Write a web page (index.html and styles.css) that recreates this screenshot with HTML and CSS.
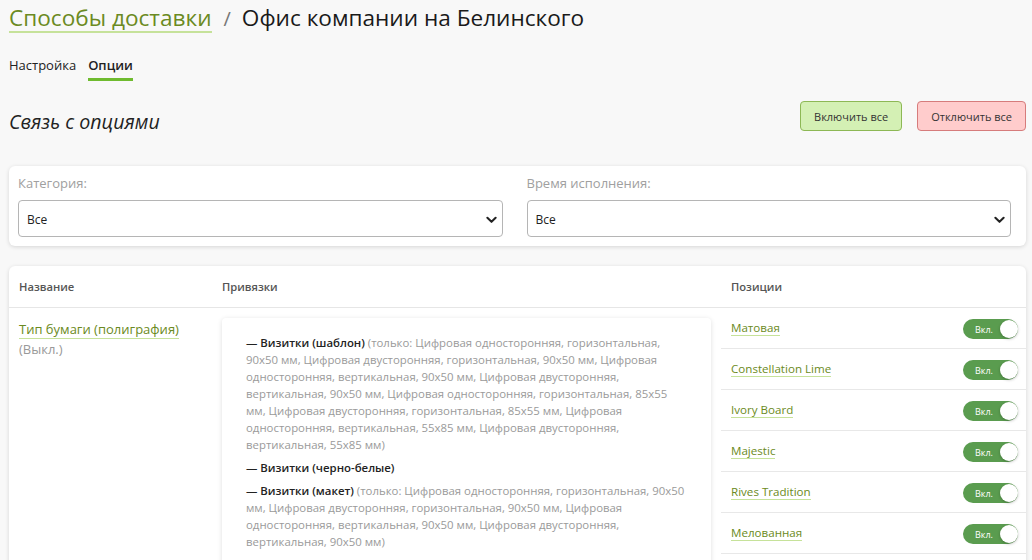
FILE: index.html
```html
<!DOCTYPE html>
<html lang="ru">
<head>
<meta charset="utf-8">
<title>Способы доставки</title>
<link rel="stylesheet" href="styles.css">
</head>
<body>
<div class="page">
  <h1 class="title"><a class="title-link" href="#">Способы доставки</a><span class="sep">/</span><span class="title-cur">Офис компании на Белинского</span></h1>
  <nav class="tabs">
    <a class="tab" href="#">Настройка</a>
    <a class="tab tab-active" href="#">Опции</a>
  </nav>
  <div class="section-head">
    <h2 class="section-title">Связь с опциями</h2>
    <div class="actions">
      <button class="btn btn-on">Включить все</button>
      <button class="btn btn-off">Отключить все</button>
    </div>
  </div>
  <div class="card filters">
    <div class="field">
      <label class="field-label">Категория:</label>
      <div class="select"><span>Все</span><svg class="chev" viewBox="0 0 12 8" width="11" height="8"><path d="M1.5 1.5 L6 6 L10.5 1.5" fill="none" stroke="#222" stroke-width="2.2" stroke-linecap="round" stroke-linejoin="round"/></svg></div>
    </div>
    <div class="field">
      <label class="field-label">Время исполнения:</label>
      <div class="select"><span>Все</span><svg class="chev" viewBox="0 0 12 8" width="11" height="8"><path d="M1.5 1.5 L6 6 L10.5 1.5" fill="none" stroke="#222" stroke-width="2.2" stroke-linecap="round" stroke-linejoin="round"/></svg></div>
    </div>
  </div>
  <div class="card table">
    <div class="thead">
      <div class="th">Название</div>
      <div class="th">Привязки</div>
      <div class="th">Позиции</div>
    </div>
    <div class="row">
      <div class="cell name-cell">
        <a class="link" href="#">Тип бумаги (полиграфия)</a>
        <div class="muted">(Выкл.)</div>
      </div>
      <div class="cell bind-cell">
        <div class="bind-box">
          <p class="bind"><b>— Визитки (шаблон)</b> (только: Цифровая односторонняя, горизонтальная, 90x50 мм, Цифровая двусторонняя, горизонтальная, 90x50 мм, Цифровая односторонняя, вертикальная, 90x50 мм, Цифровая двусторонняя, вертикальная, 90x50 мм, Цифровая односторонняя, горизонтальная, 85x55 мм, Цифровая двусторонняя, горизонтальная, 85x55 мм, Цифровая односторонняя, вертикальная, 55x85 мм, Цифровая двусторонняя, вертикальная, 55x85 мм)</p>
          <p class="bind"><b>— Визитки (черно-белые)</b></p>
          <p class="bind"><b>— Визитки (макет)</b> (только: Цифровая односторонняя, горизонтальная, 90x50 мм, Цифровая двусторонняя, горизонтальная, 90x50 мм, Цифровая односторонняя, вертикальная, 90x50 мм, Цифровая двусторонняя, вертикальная, 90x50 мм)</p>
        </div>
      </div>
      <div class="cell pos-cell">
        <div class="pos"><a class="link" href="#">Матовая</a><span class="toggle"><span class="toggle-txt">Вкл.</span><span class="knob"></span></span></div>
        <div class="pos"><a class="link" href="#">Constellation Lime</a><span class="toggle"><span class="toggle-txt">Вкл.</span><span class="knob"></span></span></div>
        <div class="pos"><a class="link" href="#">Ivory Board</a><span class="toggle"><span class="toggle-txt">Вкл.</span><span class="knob"></span></span></div>
        <div class="pos"><a class="link" href="#">Majestic</a><span class="toggle"><span class="toggle-txt">Вкл.</span><span class="knob"></span></span></div>
        <div class="pos"><a class="link" href="#">Rives Tradition</a><span class="toggle"><span class="toggle-txt">Вкл.</span><span class="knob"></span></span></div>
        <div class="pos"><a class="link" href="#">Мелованная</a><span class="toggle"><span class="toggle-txt">Вкл.</span><span class="knob"></span></span></div>
      </div>
    </div>
  </div>
</div>
</body>
</html>
```
FILE: styles.css
```css
* { box-sizing: border-box; }
html, body { margin: 0; padding: 0; }
body {
  background: #f8f8f8;
  font-family: "Open Sans", "Noto Sans", sans-serif;
  color: #222;
  overflow: hidden;
  height: 560px;
}
.page { padding: 0 6px 0 9px; }
a { text-decoration: none; }

.title {
  margin: 0;
  padding-top: 3px;
  font-size: 22.6px;
  font-weight: 400;
  line-height: 30px;
  display: flex;
  align-items: baseline;
}
.title-link {
  color: #6b8a22;
  border-bottom: 2px solid #c6e29a;
  line-height: 27px;
}
.sep { color: #777; margin: 0 11px 0 12px; font-size: 20px; }
.title-cur { color: #1a1a1a; }

.tabs {
  display: flex;
  gap: 12px;
  margin-top: 22px;
}
.tab {
  font-size: 13px;
  color: #222;
  padding-bottom: 4px;
  border-bottom: 3px solid transparent;
}
.tab-active {
  font-weight: 600;
  border-bottom-color: #6fbb2f;
}

.section-head {
  display: flex;
  justify-content: space-between;
  align-items: center;
  margin-top: 19px;
  height: 32px;
}
.section-title {
  margin: 0;
  font-size: 19.6px;
  font-weight: 400;
  font-style: italic;
  color: #222;
  padding-top: 10px;
}
.actions { display: flex; gap: 15px; }
.btn {
  font-family: inherit;
  font-size: 11px;
  height: 30px;
  padding: 0 13px;
  border-radius: 4px;
  color: #333;
  cursor: pointer;
}
.btn-on { background: #d4f0b4; border: 1px solid #8db855; }
.btn-off { background: #ffcccc; border: 1px solid #d67c7c; }

.card {
  background: #fff;
  border-radius: 6px;
  box-shadow: 0 1px 4px rgba(0,0,0,0.14);
}
.filters {
  margin-top: 34px;
  display: grid;
  grid-template-columns: 1fr 1fr;
  column-gap: 24px;
  padding: 10px 15px 9px 9px;
}
.field-label {
  display: block;
  font-size: 13px;
  color: #a0a0a0;
  line-height: 15px;
  margin-bottom: 9px;
}
.select {
  height: 37px;
  border: 1px solid #b5b5b5;
  border-radius: 4px;
  display: flex;
  align-items: center;
  justify-content: space-between;
  padding: 2px 5px 0 8px;
  font-size: 12px;
  color: #222;
}
.chev { display: block; }

.table { margin-top: 20px; overflow: hidden; min-height: 320px; }
.thead, .row {
  display: grid;
  grid-template-columns: 203px 509px 1fr;
}
.thead { border-bottom: 1px solid #e6e6e6; height: 42px; align-items: center; }
.th {
  padding-left: 10px;
  font-size: 11.2px;
  font-weight: 600;
  color: #555;
}
.cell { padding-left: 10px; }
.name-cell { padding-top: 11px; font-size: 13px; line-height: 20px; }
.link {
  color: #6b8a22;
  border-bottom: 1px solid #c6e29a;
}
.muted { color: #999; }

.bind-cell { padding: 10px 10px 0 10px; }
.bind-box {
  background: #fff;
  box-shadow: 0 1px 5px rgba(0,0,0,0.13);
  border-radius: 4px;
  padding: 16px 24px 10px 24px;
  min-height: 260px;
}
.bind {
  margin: 0 0 6px 0;
  font-size: 11.4px;
  line-height: 17px;
  color: #9a9a9a;
}
.bind b { color: #222; font-weight: 600; }

.pos-cell { padding-left: 0; }
.pos {
  display: flex;
  align-items: center;
  justify-content: space-between;
  height: 41px;
  padding: 0 8px 0 10px;
  border-bottom: 1px solid #e8e8e8;
  font-size: 11.6px;
}
.toggle {
  position: relative;
  width: 55px;
  height: 20px;
  border-radius: 10px;
  background: #5a9c4f;
  display: flex;
  align-items: center;
  margin-top: 2px;
}
.toggle-txt {
  color: #fff;
  font-size: 9px;
  padding-left: 12px;
}
.knob {
  position: absolute;
  right: 0;
  top: 1px;
  width: 18px;
  height: 18px;
  border-radius: 50%;
  background: #fff;
  box-shadow: 0 1px 3px rgba(0,0,0,0.25);
}
```
